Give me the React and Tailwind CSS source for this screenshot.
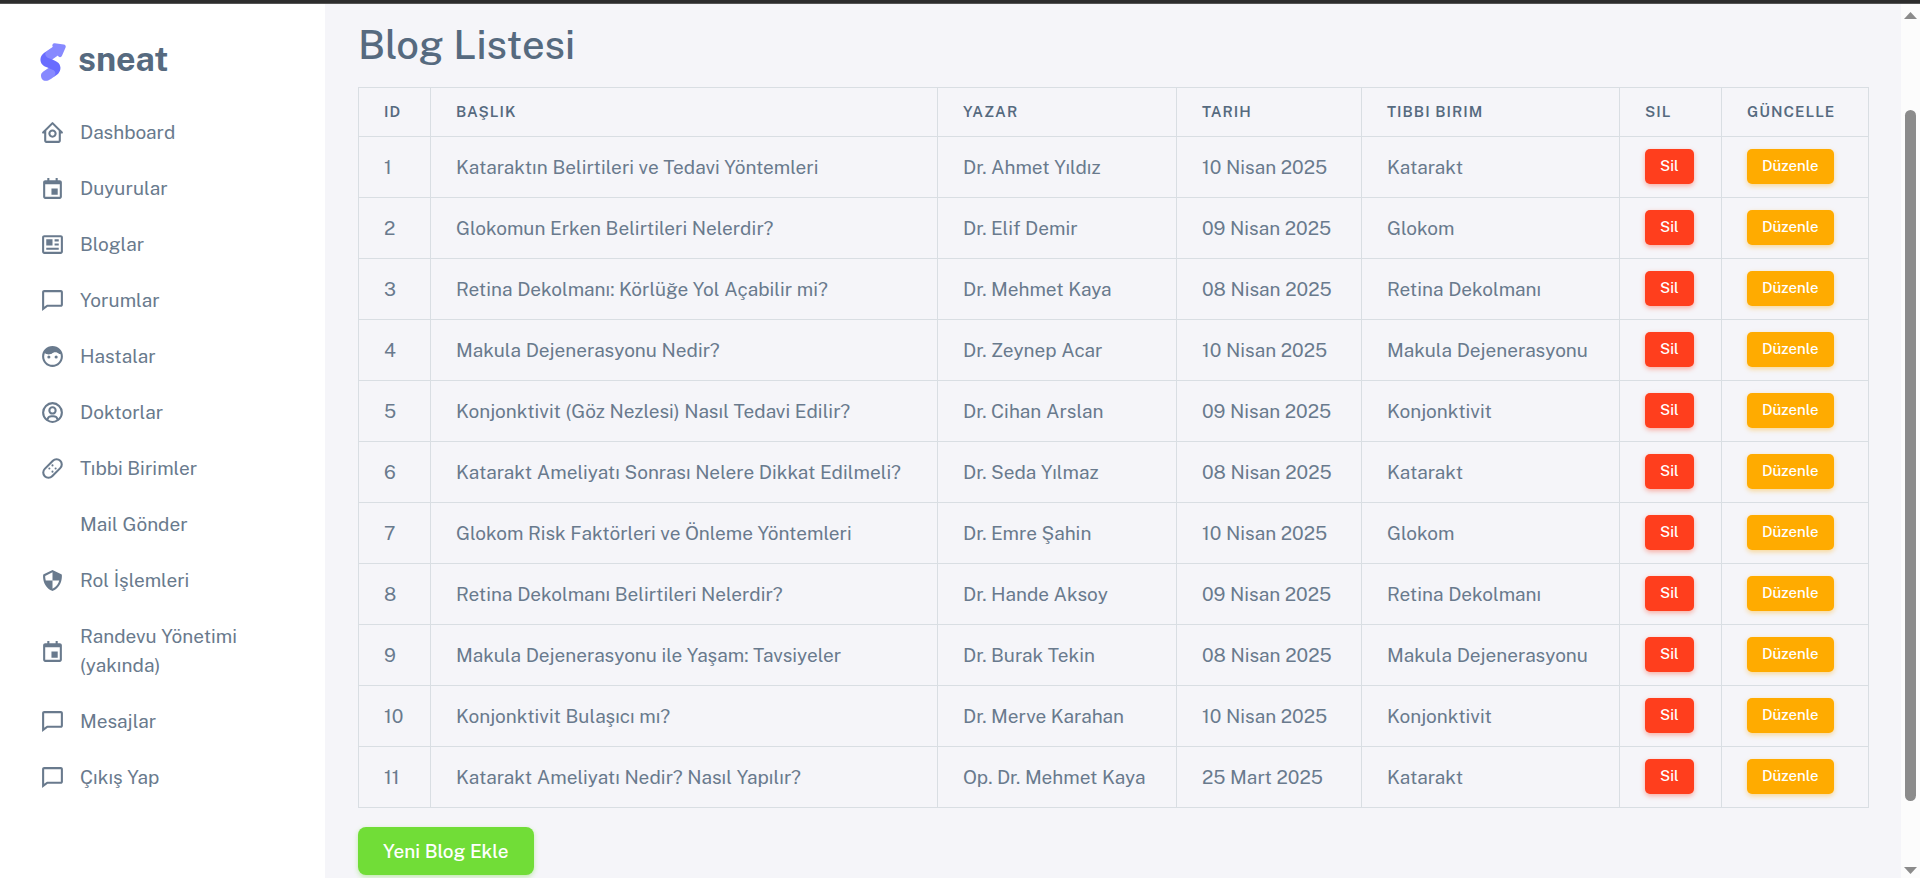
import {
  BiHomeCircle,
  BiCalendarEvent,
  BiNews,
  BiComment,
  BiSolidFace,
  BiUserCircle,
  BiBandAid,
  BiShieldQuarter,
} from "react-icons/bi";

const menu = [
  { label: "Dashboard", Icon: BiHomeCircle },
  { label: "Duyurular", Icon: BiCalendarEvent },
  { label: "Bloglar", Icon: BiNews },
  { label: "Yorumlar", Icon: BiComment },
  { label: "Hastalar", Icon: BiSolidFace },
  { label: "Doktorlar", Icon: BiUserCircle },
  { label: "Tıbbi Birimler", Icon: BiBandAid },
  { label: "Mail Gönder", Icon: null },
  { label: "Rol İşlemleri", Icon: BiShieldQuarter },
  { label: "Randevu Yönetimi (yakında)", Icon: BiCalendarEvent },
  { label: "Mesajlar", Icon: BiComment },
  { label: "Çıkış Yap", Icon: BiComment },
];

const columns = [
  { label: "ID", width: "w-[72px]" },
  { label: "BAŞLIK", width: "" },
  { label: "YAZAR", width: "w-[239px]" },
  { label: "TARIH", width: "w-[185px]" },
  { label: "TIBBI BIRIM", width: "w-[258px]" },
  { label: "SIL", width: "w-[102px]" },
  { label: "GÜNCELLE", width: "w-[147px]" },
];

const blogs = [
  ["Kataraktın Belirtileri ve Tedavi Yöntemleri", "Dr. Ahmet Yıldız", "10 Nisan 2025", "Katarakt"],
  ["Glokomun Erken Belirtileri Nelerdir?", "Dr. Elif Demir", "09 Nisan 2025", "Glokom"],
  ["Retina Dekolmanı: Körlüğe Yol Açabilir mi?", "Dr. Mehmet Kaya", "08 Nisan 2025", "Retina Dekolmanı"],
  ["Makula Dejenerasyonu Nedir?", "Dr. Zeynep Acar", "10 Nisan 2025", "Makula Dejenerasyonu"],
  ["Konjonktivit (Göz Nezlesi) Nasıl Tedavi Edilir?", "Dr. Cihan Arslan", "09 Nisan 2025", "Konjonktivit"],
  ["Katarakt Ameliyatı Sonrası Nelere Dikkat Edilmeli?", "Dr. Seda Yılmaz", "08 Nisan 2025", "Katarakt"],
  ["Glokom Risk Faktörleri ve Önleme Yöntemleri", "Dr. Emre Şahin", "10 Nisan 2025", "Glokom"],
  ["Retina Dekolmanı Belirtileri Nelerdir?", "Dr. Hande Aksoy", "09 Nisan 2025", "Retina Dekolmanı"],
  ["Makula Dejenerasyonu ile Yaşam: Tavsiyeler", "Dr. Burak Tekin", "08 Nisan 2025", "Makula Dejenerasyonu"],
  ["Konjonktivit Bulaşıcı mı?", "Dr. Merve Karahan", "10 Nisan 2025", "Konjonktivit"],
  ["Katarakt Ameliyatı Nedir? Nasıl Yapılır?", "Op. Dr. Mehmet Kaya", "25 Mart 2025", "Katarakt"],
];

const LOGO_BODY =
  "M13.79.36 3.4 7.44C.57 9.69-.38 12.48.56 15.8c.13.43.54 1.99 2.56 3.43.7.49 2.2 1.15 4.53 1.99l-.05.03-4.97 3.3c-2.19 1.75-2.54 3.96-1.07 6.62 1.28 1.65 3.65 2.09 5.53 1.37 1.26-.48 4.37-2.54 9.33-6.17 1.61-1.87 2.28-3.92 1.99-6.13-.44-2.71-2.23-4.66-5.36-5.87l-2.13-.9 7.7-5.49Z";

function Logo() {
  return (
    <svg viewBox="0 0 27 42" className="h-[46px] w-[30px] shrink-0" aria-hidden="true">
      <defs>
        <clipPath id="logo-body">
          <path d={LOGO_BODY} />
        </clipPath>
      </defs>
      <g transform="translate(0 8)">
        <path d={LOGO_BODY} fill="#696cff" />
        <g clipPath="url(#logo-body)" fill="#fff" fillOpacity="0.2">
          <path d="M5.47 6c-1.42 2.22-1.11 4.07.93 5.57 2.21 1 3.7 1.65 4.46 1.94l4.65.92 3.11-6.45L13.79.36C13.58.51 10.81 2.39 5.47 6Z" />
          <path d="m7.5 21.23 4.82 2.09c1.85 1.44 2.08 3.17.69 5.19s-2.7 3.28-3.93 3.79L4.13 34 0 31.16c-.56-3.34-.56-5.1 0-5.28.84-.27 2.78-3.06 3.3-3.35.36-.2 1.75-.63 4.2-1.3Z" />
        </g>
      </g>
      <path
        transform="translate(19 11) rotate(60) translate(-19 -11)"
        d="m20.6 7.13 5 6.67A2 2 0 0 1 24 17H14a2 2 0 0 1-1.6-3.2l5-6.67a2 2 0 0 1 3.2 0Z"
        fill="#8789ff"
      />
    </svg>
  );
}

function Sidebar() {
  return (
    <aside className="w-[325px] shrink-0 bg-white">
      <a href="#" className="flex h-[100px] items-center gap-2 pt-[10px] pl-10">
        <Logo />
        <span className="text-[34px] leading-10 font-bold text-[#566a7f]">sneat</span>
      </a>
      <nav>
        <ul>
          {menu.map(({ label, Icon }) => (
            <li key={label}>
              <a
                href="#"
                className="flex items-center gap-[15px] pt-[14px] pr-16 pb-[13px] pl-10 text-[19px] leading-[29px] text-[#697a8d]"
              >
                <span className="size-[25px] shrink-0">{Icon && <Icon size={25} />}</span>
                <span>{label}</span>
              </a>
            </li>
          ))}
        </ul>
      </nav>
    </aside>
  );
}

function ScrollBar() {
  return (
    <div className="flex w-[19px] shrink-0 flex-col items-center bg-[#fcfcfc] pt-2 pb-1" aria-hidden="true">
      <svg viewBox="0 0 13 7" className="h-[7px] w-[13px]">
        <path d="M0 7 6.5 0 13 7Z" fill="#8b8b8b" />
      </svg>
      <div className="min-h-0 w-[11px] grow pt-[91px] pb-[66px]">
        <div className="h-full rounded-full bg-[#8b8b8b]" />
      </div>
      <svg viewBox="0 0 13 7" className="h-[7px] w-[13px]">
        <path d="M0 0H13L6.5 7Z" fill="#8b8b8b" />
      </svg>
    </div>
  );
}

const smallButton =
  "block h-[35px] rounded-[5px] px-[15px] pb-[1px] text-[15px] leading-[20px] font-medium text-white";

export default function App() {
  return (
    <div className="flex h-screen flex-col overflow-hidden bg-[#f5f5f9] font-['Public_Sans','Roboto',sans-serif]">
      <div className="h-1 shrink-0 border-b border-[#555] bg-[#2d2d2d]" />
      <div className="flex min-h-0 grow">
        <Sidebar />
        <main className="min-w-0 grow overflow-hidden pr-8 pl-[33px]">
          <h1 className="pt-[17px] pb-[18px] text-[40px] leading-[48px] font-medium text-[#566a7f]">Blog Listesi</h1>
          <table className="w-full table-fixed border-collapse border border-[#d9dee3] text-left whitespace-nowrap">
            <thead>
              <tr className="h-[49px]">
                {columns.map(({ label, width }) => (
                  <th
                    key={label}
                    scope="col"
                    className={`${width} border border-[#d9dee3] px-[25px] text-[15px] font-semibold tracking-[1px] text-[#566a7f]`}
                  >
                    {label}
                  </th>
                ))}
              </tr>
            </thead>
            <tbody>
              {blogs.map((cells, i) => (
                <tr key={i} className="h-[61px] text-[19px] text-[#697a8d]">
                  <td className="border border-[#d9dee3] px-[25px]">{i + 1}</td>
                  {cells.map((cell, j) => (
                    <td key={j} className="border border-[#d9dee3] px-[25px]">
                      {cell}
                    </td>
                  ))}
                  <td className="border border-[#d9dee3] px-[25px] pt-3 align-top">
                    <button type="button" className={`${smallButton} bg-[#ff3e1d] shadow-[0_2px_5px_rgba(255,62,29,0.4)]`}>
                      Sil
                    </button>
                  </td>
                  <td className="border border-[#d9dee3] px-[25px] pt-3 align-top">
                    <button type="button" className={`${smallButton} bg-[#ffab00] shadow-[0_2px_5px_rgba(255,171,0,0.4)]`}>
                      Düzenle
                    </button>
                  </td>
                </tr>
              ))}
            </tbody>
          </table>
          <button
            type="button"
            className="mt-[19px] h-12 rounded-lg bg-[#71dd37] px-[25px] text-[19px] font-medium text-white shadow-[0_2px_5px_rgba(113,221,55,0.4)]"
          >
            Yeni Blog Ekle
          </button>
        </main>
        <ScrollBar />
      </div>
    </div>
  );
}
